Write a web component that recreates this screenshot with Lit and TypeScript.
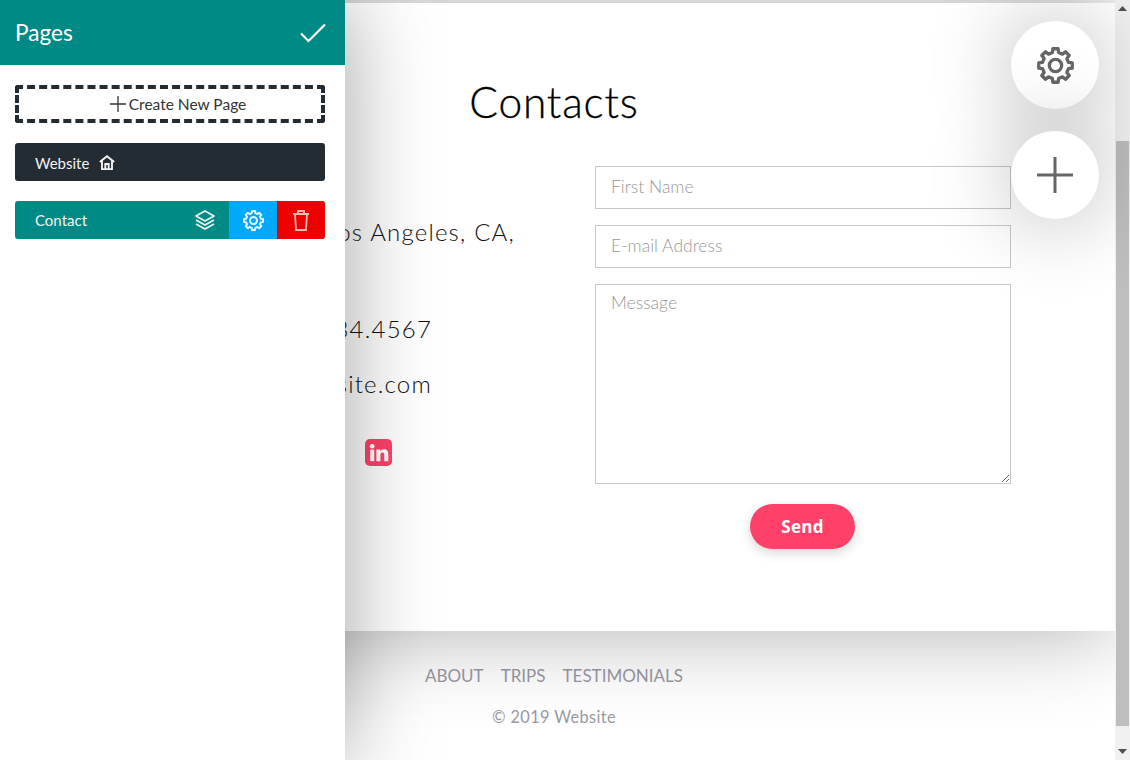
import { LitElement, html, css, svg } from "lit";
import { customElement } from "lit/decorators.js";

function gearPath(cx: number, cy: number, ro: number, ri: number, teeth: number): string {
  const pts: string[] = [];
  const step = (Math.PI * 2) / teeth;
  for (let i = 0; i < teeth; i++) {
    const a = i * step - Math.PI / 2;
    const p = (r: number, t: number) =>
      `${(cx + r * Math.cos(a + t * step)).toFixed(2)} ${(cy + r * Math.sin(a + t * step)).toFixed(2)}`;
    pts.push(`${i === 0 ? "M" : "L"}${p(ri, -0.3)}`);
    pts.push(`L${p(ro, -0.2)}`);
    pts.push(`L${p(ro, 0.2)}`);
    pts.push(`L${p(ri, 0.3)}`);
  }
  return pts.join(" ") + "Z";
}

const gear = (size: number, color: string, sw: number) => html`<svg
  width=${size}
  height=${size}
  viewBox="0 0 36 36"
  fill="none"
  stroke=${color}
  stroke-width=${sw}
  stroke-linejoin="round"
>
  ${svg`<path d=${gearPath(18, 18, 16.5, 13, 8)} /><circle cx="18" cy="18" r="6" />`}
</svg>`;

@customElement("app-root")
export class AppRoot extends LitElement {
  static styles = css`
    :host {
      display: block;
      width: 1130px;
      height: 760px;
      position: relative;
      overflow: hidden;
      background: #fff;
      font-family: "Lato", "Liberation Sans", sans-serif;
    }
    .page {
      display: flex;
      height: 760px;
    }
    .main {
      flex: 1;
      min-width: 0;
      display: flex;
      flex-direction: column;
      padding-top: 3px;
      background: #fff;
    }
    .content {
      position: relative;
      z-index: 1;
      height: 628px;
      background: #fff;
      box-shadow: 0 0 85px rgba(0, 0, 0, 0.32);
      display: flex;
      flex-direction: column;
    }
    h1 {
      margin: 0;
      height: 163px;
      box-sizing: border-box;
      padding: 70px 7px 0 0;
      text-align: center;
      font-weight: 300;
      font-size: 42.5px;
      line-height: 58px;
      letter-spacing: 0.8px;
      color: #000;
      -webkit-text-stroke: 0.3px #000;
    }
    .cols {
      display: flex;
      gap: 80px;
    }
    .info {
      width: 515px;
      text-align: right;
      font-weight: 300;
      font-size: 24px;
      letter-spacing: 1.2px;
      color: #111;
    }
    .info p {
      margin: 0;
    }
    .addr {
      padding-top: 50px;
      line-height: 32px;
    }
    .tel,
    .mail {
      padding-right: 83px;
      line-height: 32px;
    }
    .tel {
      padding-top: 65px;
    }
    .mail {
      padding-top: 23px;
    }
    .social {
      display: flex;
      justify-content: flex-end;
      padding: 39px 123px 0 0;
    }
    .form {
      width: 416px;
      display: flex;
      flex-direction: column;
      gap: 16px;
    }
    input,
    textarea {
      display: block;
      box-sizing: border-box;
      width: 100%;
      margin: 0;
      border: 1px solid #c8c8c8;
      border-radius: 0;
      background: transparent;
      padding: 0 15px;
      font: 300 17.5px "Lato", sans-serif;
      color: #333;
      outline: none;
    }
    input {
      height: 43px;
      padding-bottom: 2px;
    }
    textarea {
      height: 200px;
      padding-top: 7px;
      resize: both;
    }
    ::placeholder {
      color: #999;
      opacity: 1;
    }
    .send {
      align-self: center;
      margin: 4px 1px 0 0;
      width: 105px;
      height: 45px;
      border: none;
      border-radius: 23px;
      background: #ff4169;
      color: #fff;
      font: 700 17px "Open Sans", sans-serif;
      letter-spacing: 0.3px;
      box-shadow: 0 4px 12px rgba(0, 0, 0, 0.16);
      padding: 0;
    }
    footer {
      flex: 1;
      padding: 0 7px 0 0;
      display: flex;
      flex-direction: column;
      align-items: center;
      color: #9a9aa6;
    }
    nav {
      display: flex;
      gap: 17px;
      padding-top: 34px;
      font-size: 17px;
      line-height: 22px;
      font-weight: 400;
    }
    .copy {
      padding-top: 19px;
      font-size: 16.3px;
      line-height: 22px;
      font-weight: 400;
      letter-spacing: 0.4px;
    }
    .scroll {
      position: relative;
      z-index: 2;
      width: 15px;
      background: #f1f1f1;
      display: flex;
      flex-direction: column;
    }
    .arrow {
      height: 17px;
      display: flex;
      align-items: center;
      justify-content: center;
    }
    .track {
      flex: 1;
      padding: 124px 1px 17px;
      display: flex;
    }
    .thumb {
      flex: 1;
      background: #bebebe;
    }
    .fab {
      position: absolute;
      left: 1011px;
      width: 88px;
      height: 88px;
      border-radius: 50%;
      background: #fff;
      box-shadow: 0 0 85px rgba(0, 0, 0, 0.32);
      display: flex;
      align-items: center;
      justify-content: center;
      z-index: 3;
    }
    .fab.a {
      top: 21px;
    }
    .fab.b {
      top: 131px;
    }
    aside {
      position: absolute;
      z-index: 4;
      left: 0;
      top: 0;
      width: 345px;
      height: 760px;
      background: #fff;
      box-shadow: 0 0 85px rgba(0, 0, 0, 0.37);
      display: flex;
      flex-direction: column;
    }
    .head {
      height: 65px;
      background: #008a86;
      color: #fff;
      display: flex;
      align-items: center;
      justify-content: space-between;
      padding: 0 19px 0 15px;
      font-size: 22.600px;
    }
    .list {
      padding: 20px 20px 20px 15px;
      display: flex;
      flex-direction: column;
      gap: 20px;
    }
    .create,
    .row {
      height: 38px;
      box-sizing: border-box;
      border-radius: 3px;
      display: flex;
      align-items: center;
      font-size: 15px;
    }
    .create {
      border: 4px dashed #232b33;
      justify-content: center;
      color: #333;
      gap: 2px;
      padding-left: 15px;
      font-size: 15.500px;
    }
    .row {
      color: #f2f2f2;
      padding-left: 20px;
      overflow: hidden;
    }
    .row.home {
      background: #232b33;
      gap: 10px;
    }
    .row.home .label {
      padding-top: 1px;
    }
    .row.page-row {
      background: #008a86;
    }
    .label {
      flex: 1;
    }
    .home .label {
      flex: none;
    }
    .row-layers {
      width: 48px;
      display: flex;
      justify-content: center;
    }
    .act {
      width: 48px;
      height: 38px;
      display: flex;
      align-items: center;
      justify-content: center;
    }
    .act.blue {
      background: #00a8ff;
    }
    .act.red {
      background: #ee0000;
    }
  `;

  render() {
    return html`
      <div class="page">
        <div class="main">
          <section class="content">
            <h1>Contacts</h1>
            <div class="cols">
              <div class="info">
                <p class="addr">123 Main Street, Los Angeles, CA,</p>
                <p class="tel">123.234.4567</p>
                <p class="mail">info@website.com</p>
                <div class="social">
                  <svg width="27" height="27" viewBox="0 0 28 28">
                    <rect width="28" height="28" rx="5" fill="#ff4169" />
                    <circle cx="7.500" cy="7.500" r="2.400" fill="#fff" />
                    <rect x="5.400" y="11" width="4.200" height="12" fill="#fff" />
                    <path
                      fill="#fff"
                      d="M11.800 11h4v1.700c.8-1.200 2.200-2 3.900-2 3.300 0 4.500 2.100 4.500 5.300v7h-4.200v-6.300c0-1.600-.5-2.600-1.900-2.600-1.500 0-2.100 1.100-2.100 2.700v6.200h-4.200z"
                    />
                  </svg>
                </div>
              </div>
              <form class="form">
                <input placeholder="First Name" />
                <input placeholder="E-mail Address" />
                <textarea placeholder="Message"></textarea>
                <button class="send" type="button">Send</button>
              </form>
            </div>
          </section>
          <footer>
            <nav>
              <span>ABOUT</span><span>TRIPS</span><span>TESTIMONIALS</span>
            </nav>
            <div class="copy">© 2019 Website</div>
          </footer>
        </div>
        <div class="scroll">
          <div class="arrow">
            <svg width="9" height="5" viewBox="0 0 9 5"><path d="M4.500 0L9 5H0z" fill="#505050" /></svg>
          </div>
          <div class="track"><div class="thumb"></div></div>
          <div class="arrow">
            <svg width="9" height="5" viewBox="0 0 9 5"><path d="M0 0h9L4.500 5z" fill="#505050" /></svg>
          </div>
        </div>
      </div>

      <div class="fab a">${gear(37, "#666", 3.2)}</div>
      <div class="fab b">
        <svg width="36" height="36" viewBox="0 0 36 36" stroke="#666" stroke-width="3">
          <path d="M18 0v36M0 18h36" />
        </svg>
      </div>

      <aside>
        <div class="head">
          <span>Pages</span>
          <svg width="26" height="20" viewBox="0 0 26 20" fill="none" stroke="#fff" stroke-width="2.200">
            <path d="M1 10.500l7.500 7.500L25 1.500" />
          </svg>
        </div>
        <div class="list">
          <div class="create">
            <svg width="18" height="18" viewBox="0 0 18 18" stroke="#333" stroke-width="1.300">
              <path d="M9 1v16M1 9h16" />
            </svg>
            <span>Create New Page</span>
          </div>
          <div class="row home">
            <span class="label">Website</span>
            <svg width="16" height="15" viewBox="0 0 16 15" fill="none" stroke="#f2f2f2" stroke-width="1.900">
              <path d="M.8 7L8 1.200 15.200 7" />
              <path d="M3 5.500v8.700h10V5.500" />
              <path d="M6.300 14V9h3.400v5" />
            </svg>
          </div>
          <div class="row page-row">
            <span class="label">Contact</span>
            <span class="row-layers">
              <svg width="20" height="20" viewBox="0 0 20 20" fill="none" stroke="#e8f4f3" stroke-width="1.700" stroke-linejoin="round">
                <path d="M10 1l9 5-9 5-9-5z" />
                <path d="M1 10l9 5 9-5" />
                <path d="M1 14l9 5 9-5" />
              </svg>
            </span>
            <span class="act blue">${gear(21, "#e6f6ff", 3.400)}</span>
            <span class="act red">
              <svg width="18" height="21" viewBox="0 0 18 21" fill="none" stroke="#ffb8b8" stroke-width="1.800">
                <path d="M1 4h16M6 4V1h6v3" />
                <path d="M3 4l1 16h10l1-16" />
              </svg>
            </span>
          </div>
        </div>
      </aside>
    `;
  }
}
